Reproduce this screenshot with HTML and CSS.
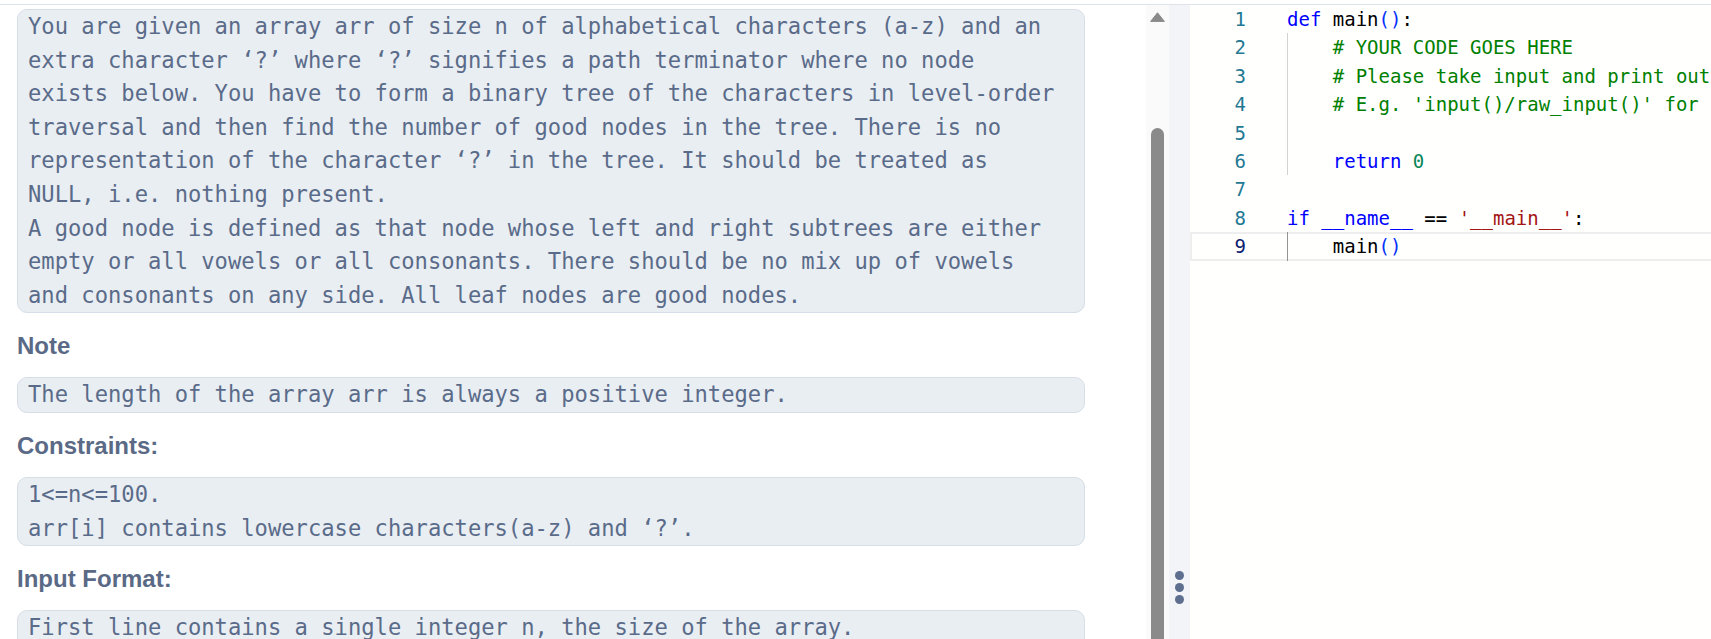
FILE: index.html
```html
<!DOCTYPE html>
<html lang="en">
<head>
<meta charset="utf-8">
<title>Good Nodes</title>
<link rel="stylesheet" href="styles.css">
</head>
<body>
<div class="topbar"></div>
<div class="main">
  <section class="problem">
    <div class="block">You are given an array arr of size n of alphabetical characters (a-z) and an<br>extra character ‘?’ where ‘?’ signifies a path terminator where no node<br>exists below. You have to form a binary tree of the characters in level-order<br>traversal and then find the number of good nodes in the tree. There is no<br>representation of the character ‘?’ in the tree. It should be treated as<br>NULL, i.e. nothing present.<br>A good node is defined as that node whose left and right subtrees are either<br>empty or all vowels or all consonants. There should be no mix up of vowels<br>and consonants on any side. All leaf nodes are good nodes.</div>
    <h3 class="heading">Note</h3>
    <div class="block">The length of the array arr is always a positive integer.</div>
    <h3 class="heading">Constraints:</h3>
    <div class="block">1&lt;=n&lt;=100.<br>arr[i] contains lowercase characters(a-z) and ‘?’.</div>
    <h3 class="heading">Input Format:</h3>
    <div class="block">First line contains a single integer n, the size of the array.<br>Second line contains n space separated characters of the array.</div>
  </section>
  <div class="scrollbar">
    <svg class="arrow" width="15" height="10" viewBox="0 0 15 10"><path d="M7.5 0.8 L14.4 9.4 L0.6 9.4 Z" fill="#8a8a8a" stroke="#8a8a8a" stroke-width="1" stroke-linejoin="round"/></svg>
    <div class="thumb"></div>
  </div>
  <div class="gutter">
    <span class="dot"></span>
    <span class="dot"></span>
    <span class="dot"></span>
  </div>
  <div class="editor">
    <div class="line"><span class="ln">1</span><span class="code"><span class="kw">def</span> main<span class="br">()</span>:</span></div>
    <div class="line"><span class="ln">2</span><span class="code"><span class="ig"></span><span class="cm"># YOUR CODE GOES HERE</span></span></div>
    <div class="line"><span class="ln">3</span><span class="code"><span class="ig"></span><span class="cm"># Please take input and print output to standard input/output (stdin/stdout)</span></span></div>
    <div class="line"><span class="ln">4</span><span class="code"><span class="ig"></span><span class="cm"># E.g. 'input()/raw_input()' for input &amp; 'print' for output</span></span></div>
    <div class="line"><span class="ln">5</span><span class="code"><span class="ig"></span></span></div>
    <div class="line"><span class="ln">6</span><span class="code"><span class="ig"></span><span class="kw">return</span> <span class="num">0</span></span></div>
    <div class="line"><span class="ln">7</span><span class="code"></span></div>
    <div class="line"><span class="ln">8</span><span class="code"><span class="kw">if</span> <span class="kw">__name__</span> == <span class="str">'__main__'</span>:</span></div>
    <div class="line current"><span class="ln">9</span><span class="code"><span class="ig active"></span>main<span class="br">()</span></span></div>
  </div>
</div>
</body>
</html>
```

FILE: styles.css
```css
html, body {
  margin: 0;
  height: 639px;
  overflow: hidden;
  background: #ffffff;
}

body {
  font-family: "Liberation Sans", Arial, sans-serif;
}

.topbar {
  height: 4px;
  border-bottom: 1px solid #dfe4ea;
}

.main {
  display: grid;
  grid-template-columns: 1146px 23px 21px 1fr;
  height: 634px;
  overflow: hidden;
}

.problem {
  padding: 4px 61px 0 17px;
  overflow: hidden;
  min-width: 0;
}

.block {
  background: #e9eef3;
  border: 1px solid #d6dee7;
  border-radius: 10px;
  padding: 0 10px;
  font-family: "DejaVu Sans Mono", "Liberation Mono", monospace;
  font-size: 22.15px;
  line-height: 33.6px;
  color: #5a6b89;
  white-space: nowrap;
}

.heading {
  font-size: 24px;
  line-height: 28px;
  font-weight: bold;
  color: #5a6a86;
  margin: 19px 0 17px;
}

.scrollbar {
  background: #fafafa;
  display: flex;
  flex-direction: column;
  align-items: center;
}

.arrow {
  margin-top: 7px;
  flex: none;
}

.thumb {
  margin-top: 106px;
  width: 13px;
  flex: 1;
  background: #8a8a8a;
  border-radius: 6.5px 6.5px 0 0;
}

.gutter {
  background: #f2f4f8;
  display: flex;
  flex-direction: column;
  align-items: center;
  padding-top: 566px;
  gap: 3px;
}

.dot {
  width: 9px;
  height: 9px;
  border-radius: 50%;
  background: #5e6e8e;
}

.editor {
  overflow: hidden;
  min-width: 0;
  background: #fffffe;
  font-family: "DejaVu Sans Mono", "Liberation Mono", monospace;
  font-size: 19px;
  line-height: 28.4px;
  color: #000000;
}

.line {
  display: flex;
  height: 28.4px;
}

.line.current {
  box-shadow: inset 2px 0 0 #eeeeee, inset 0 2px 0 #eeeeee, inset 0 -2px 0 #eeeeee;
}

.ln {
  flex: none;
  width: 56px;
  text-align: right;
  color: #237893;
}

.line.current .ln {
  color: #0b216f;
}

.code {
  margin-left: 41px;
  white-space: pre;
}

.ig {
  display: inline-block;
  width: 4ch;
  height: 28.4px;
  vertical-align: top;
  box-shadow: inset 1px 0 0 #d3d3d3;
}

.ig.active {
  box-shadow: inset 1px 0 0 #939393;
}

.kw { color: #0000ff; }
.br { color: #0431fa; }
.cm { color: #008000; }
.num { color: #098658; }
.str { color: #a31515; }
```
